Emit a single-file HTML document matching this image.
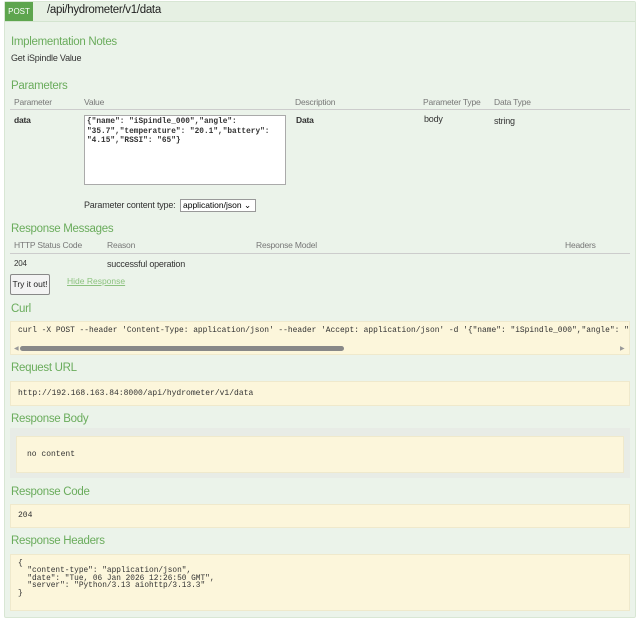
<!DOCTYPE html>
<html><head><meta charset="utf-8"><style>
*{margin:0;padding:0;box-sizing:border-box}
body{width:640px;height:621px;background:#fff;font-family:"Liberation Sans",sans-serif;position:relative;overflow:hidden;color:#333}
.a{position:absolute;white-space:nowrap}
.h{color:#6aac5c;font-size:11.5px;letter-spacing:-0.3px}
.s{font-size:9px;color:#333;letter-spacing:-0.2px}
.g{font-size:8.5px;color:#777;letter-spacing:-0.2px}
.m{font-family:"Liberation Mono",monospace;font-size:8px;color:#333}
.box{position:absolute;background:#fcf6db;border:1px solid #efe9cc}
</style></head><body>
<div class="a" style="left:4px;top:1px;width:632px;height:617px;background:#ebf3ea;border:1px solid #d8e6d4;border-radius:2px"></div>
<div class="a" style="left:5px;top:2px;width:630px;height:20px;background:#e6f0e3;border-bottom:1px solid #d3e4cf"></div>
<div class="a" style="left:5px;top:2px;width:28px;height:19px;background:#5ea54e;color:#fff;font-size:8px;line-height:19px;text-align:center">POST</div>
<div class="a" style="left:47px;top:4px;font-size:11.5px;color:#222;letter-spacing:-0.3px">/api/hydrometer/v1/data</div>

<div class="a h" style="left:11px;top:36px">Implementation Notes</div>
<div class="a s" style="left:11px;top:53px">Get iSpindle Value</div>

<div class="a h" style="left:11px;top:80px">Parameters</div>
<div class="a g" style="left:14px;top:97px">Parameter</div>
<div class="a g" style="left:84px;top:97px">Value</div>
<div class="a g" style="left:295px;top:97px">Description</div>
<div class="a g" style="left:423px;top:97px">Parameter Type</div>
<div class="a g" style="left:494px;top:97px">Data Type</div>
<div class="a" style="left:10px;top:109px;width:620px;height:1px;background:#ccc"></div>
<div class="a s" style="left:14px;top:115px;font-weight:bold;font-size:8.5px">data</div>
<div class="a" style="left:84px;top:115px;width:202px;height:70px;background:#fff;border:1px solid #aaa"></div>
<div class="a m" style="left:87px;top:118px;font-weight:bold;line-height:9.5px;font-size:7.8px">{"name": "iSpindle_000","angle":<br>"35.7","temperature": "20.1","battery":<br>"4.15","RSSI": "65"}</div>
<div class="a s" style="left:296px;top:115px;font-weight:bold;font-size:8.5px">Data</div>
<div class="a s" style="left:424px;top:114px">body</div>
<div class="a s" style="left:494px;top:116px">string</div>
<div class="a s" style="left:84px;top:200px">Parameter content type:</div>
<div class="a" style="left:180px;top:199px;width:76px;height:13px;background:#fff;border:1px solid #999;font-size:8.5px;line-height:11px;padding-left:2px;color:#000">application/json ⌄</div>

<div class="a h" style="left:11px;top:223px">Response Messages</div>
<div class="a g" style="left:14px;top:240px">HTTP Status Code</div>
<div class="a g" style="left:107px;top:240px">Reason</div>
<div class="a g" style="left:256px;top:240px">Response Model</div>
<div class="a g" style="left:565px;top:240px">Headers</div>
<div class="a" style="left:10px;top:253px;width:620px;height:1px;background:#ccc"></div>
<div class="a s" style="left:14px;top:259px;font-size:8px">204</div>
<div class="a s" style="left:107px;top:259px">successful operation</div>
<div class="a" style="left:10px;top:274px;width:40px;height:21px;background:#f3f3f3;border:1px solid #888;border-radius:2px;font-size:8.5px;line-height:19px;text-align:center;color:#222">Try it out!</div>
<div class="a" style="left:67px;top:276px;font-size:8.5px;color:#8cc27f;text-decoration:underline">Hide Response</div>

<div class="a h" style="left:11px;top:303px">Curl</div>
<div class="box" style="left:10px;top:321px;width:620px;height:34px"></div>
<div class="a m" style="left:18px;top:326px;font-size:7.9px;width:610px;overflow:hidden">curl -X POST --header 'Content-Type: application/json' --header 'Accept: application/json' -d '{"name": "iSpindle_000","angle": "35.7"</div>
<div class="a" style="left:20px;top:346px;width:324px;height:5px;background:#888;border-radius:3px"></div>
<div class="a" style="left:14px;top:345px;font-size:6px;color:#999">◀</div>
<div class="a" style="left:620px;top:345px;font-size:6px;color:#999">▶</div>

<div class="a h" style="left:11px;top:362px">Request URL</div>
<div class="box" style="left:10px;top:381px;width:620px;height:25px"></div>
<div class="a m" style="left:18px;top:389px">http://192.168.163.84:8000/api/hydrometer/v1/data</div>

<div class="a h" style="left:11px;top:413px">Response Body</div>
<div class="a" style="left:10px;top:428px;width:620px;height:50px;background:#e8ece6"></div>
<div class="box" style="left:16px;top:436px;width:608px;height:37px"></div>
<div class="a m" style="left:27px;top:450px">no content</div>

<div class="a h" style="left:11px;top:486px">Response Code</div>
<div class="box" style="left:10px;top:504px;width:620px;height:24px"></div>
<div class="a m" style="left:18px;top:511px">204</div>

<div class="a h" style="left:11px;top:535px">Response Headers</div>
<div class="box" style="left:10px;top:554px;width:620px;height:57px"></div>
<div class="a m" style="left:18px;top:561px;line-height:7.4px;font-size:7.8px;white-space:pre">{
  "content-type": "application/json",
  "date": "Tue, 06 Jan 2026 12:26:50 GMT",
  "server": "Python/3.13 aiohttp/3.13.3"
}</div>
</body></html>
